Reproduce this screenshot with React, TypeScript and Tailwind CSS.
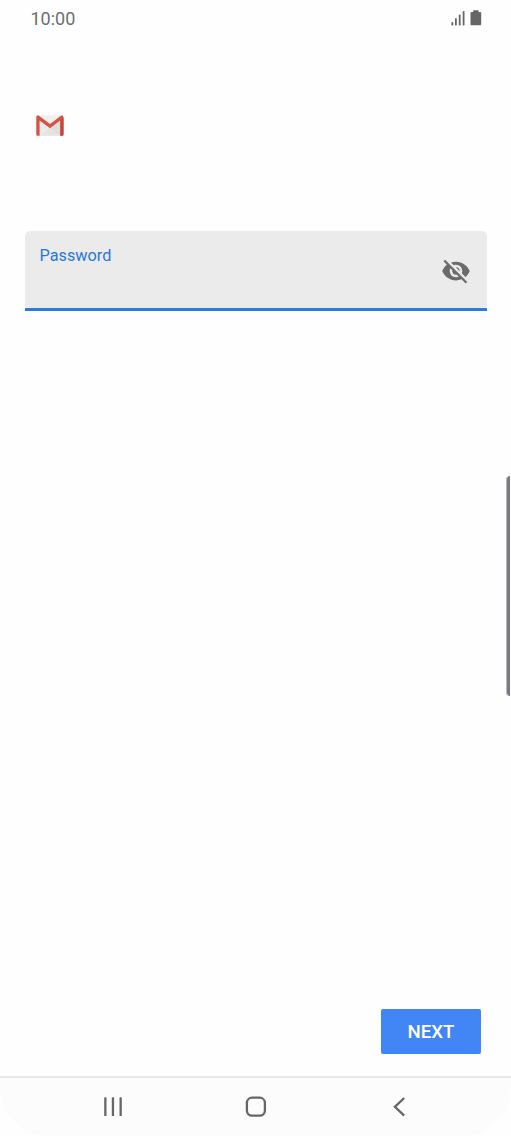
import React, { useState } from "react";

function SignalIcon() {
  return (
    <svg width="14" height="15" viewBox="0 0 14 15" fill="#666666">
      <rect x="0.4" y="11.2" width="1.8" height="3.2" />
      <rect x="4" y="7.3" width="1.8" height="7.1" />
      <rect x="7.8" y="3.6" width="1.8" height="10.8" />
      <rect x="11.7" y="0.2" width="1.8" height="14.2" />
    </svg>
  );
}

function BatteryIcon() {
  return (
    <svg width="12" height="16" viewBox="0 0 12 16" fill="#666666">
      <path d="M3.2 0.3h5.4v1.7h1.6a1 1 0 0 1 1 1v11.2a1 1 0 0 1-1 1H1.5a1 1 0 0 1-1-1V3a1 1 0 0 1 1-1h1.7z" />
    </svg>
  );
}

function GmailLogo() {
  return (
    <svg width="28" height="22" viewBox="0 0 28 22">
      <rect x="0.3" y="0.5" width="27.2" height="20.3" rx="1.6" fill="#ededed" />
      <path d="M3.5 20.8L13.8 12.6 24.5 20.8z" fill="#e4e4e4" />
      <path d="M3.5 3.5v17.3L11 11z" fill="#e9e9e9" />
      <path d="M14 13l10-6.5v14.3z" fill="#dddddd" />
      <path d="M3.5 0.5h21L14 8.6z" fill="#f2efee" />
      <path
        d="M2 .5c.5 0 .9.1 1.3.4L14 8.9 24.6.9c.4-.3.8-.4 1.3-.4.9 0 1.6.7 1.6 1.7v17c0 .9-.7 1.6-1.6 1.6h-1.6V5.5L14 13.2 3.6 5.5v15.3H1.9c-.9 0-1.6-.7-1.6-1.6v-17C.3 1.2 1 .5 2 .5z"
        fill="#d75246"
      />
      <path d="M24.3 5.5l3.2-2.5v16.2c0 .9-.7 1.6-1.6 1.6h-1.6z" fill="#ca463a" />
    </svg>
  );
}

function EyeOffIcon() {
  return (
    <svg width="30" height="30" viewBox="0 0 24 24" fill="#6b6b6b">
      <path d="M12 7c2.76 0 5 2.24 5 5 0 .65-.13 1.26-.36 1.83l2.92 2.92c1.51-1.26 2.7-2.89 3.43-4.75-1.73-4.39-6-7.5-11-7.5-1.4 0-2.74.25-3.98.7l2.16 2.16C10.74 7.13 11.35 7 12 7zM2 4.27l2.28 2.28.46.46C3.08 8.3 1.78 10.02 1 12c1.73 4.39 6 7.5 11 7.5 1.55 0 3.03-.3 4.38-.84l.42.42L19.73 22 21 20.73 3.27 3 2 4.27zM7.53 9.8l1.55 1.55c-.05.21-.08.43-.08.65 0 1.66 1.34 3 3 3 .22 0 .44-.03.65-.08l1.55 1.55c-.67.33-1.41.53-2.2.53-2.76 0-5-2.24-5-5 0-.79.2-1.53.53-2.2zm4.31-.78l3.15 3.15.02-.16c0-1.66-1.34-3-3-3l-.17.01z" />
    </svg>
  );
}

export default function App() {
  const [password, setPassword] = useState("");
  const [visible, setVisible] = useState(false);

  return (
    <div className="relative w-[511px] h-[1136px] bg-[#fefefe] overflow-hidden flex flex-col font-['Roboto',sans-serif]">
      {/* Status bar */}
      <header className="h-[37px] shrink-0 flex items-center justify-between pl-[30.5px] pr-[29px]">
        <span className="text-[18px] leading-5 text-[#6e6e6e]">10:00</span>
        <div className="flex items-center gap-[5.5px] pb-px">
          <SignalIcon />
          <BatteryIcon />
        </div>
      </header>

      <main className="flex-1 flex flex-col pl-[24.5px] pr-[24.5px]">
        <div className="pt-[78px] pl-[11px]">
          <GmailLogo />
        </div>

        {/* Password field */}
        <div className="mt-[94px] h-[80px] flex items-center justify-between bg-[#ebebeb] rounded-t-[5px] border-b-[3px] border-[#2c7be0] pl-[15px] pr-[15.5px]">
          <label className="self-stretch flex-1 pt-[15px] text-[16.3px] leading-5 text-[#2878d8]">
            Password
            <input
              type={visible ? "text" : "password"}
              value={password}
              onChange={(e) => setPassword(e.target.value)}
              className="block w-full bg-transparent outline-none text-[#333333]"
            />
          </label>
          <button
            onClick={() => setVisible(!visible)}
            aria-label="Toggle password"
            className="pt-[2px]"
          >
            <EyeOffIcon />
          </button>
        </div>

        <div className="mt-auto pb-[22px] pr-[5.5px] flex justify-end">
          <button className="w-[100px] h-[45px] pt-[2px] rounded-[2px] bg-[#4285f4] text-white text-[18.7px] font-medium">
            NEXT
          </button>
        </div>
      </main>

      {/* Navigation bar */}
      <nav className="h-[60px] shrink-0 border-t-2 border-[#e7e7e7] bg-[#fcfcfc] rounded-b-[50px] flex items-center justify-between pl-[103px] pr-[105px] text-[#666666]">
        <svg width="20" height="20" viewBox="0 0 20 20" fill="currentColor">
          <rect x="1.2" y="0.3" width="2.3" height="18.8" rx="0.6" />
          <rect x="8.8" y="0.3" width="2.3" height="18.8" rx="0.6" />
          <rect x="16.5" y="0.3" width="2.3" height="18.8" rx="0.6" />
        </svg>
        <svg
          width="22"
          height="22"
          viewBox="0 0 22 22"
          fill="none"
          stroke="currentColor"
          strokeWidth="2.3"
          className="-ml-[4px]"
        >
          <rect x="1.9" y="1.7" width="18" height="18" rx="5.2" />
        </svg>
        <svg width="14" height="20" viewBox="0 0 14 20" fill="none" stroke="currentColor" strokeWidth="2.3">
          <path d="M12.2 1L2.9 9.8l9.3 8.8" />
        </svg>
      </nav>

      {/* Edge panel handle */}
      <div className="absolute left-[505.5px] top-[476px] w-[4.5px] h-[220px] rounded-l-[5px] bg-[#777983] border-l border-[#b9bac1]" />
    </div>
  );
}
